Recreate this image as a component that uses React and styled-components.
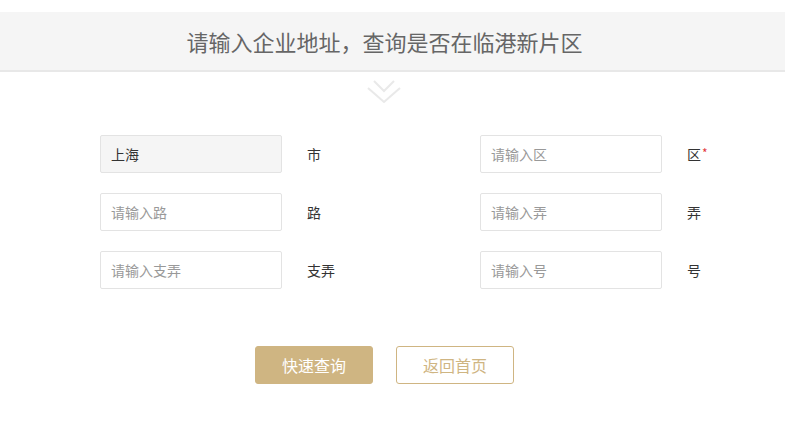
import React from "react";
import styled, { createGlobalStyle } from "styled-components";

const Global = createGlobalStyle`
  html, body { margin: 0; padding: 0; background: #fff; }
  body { font-family: "Noto Sans CJK SC", "Noto Sans", sans-serif; }
  input::placeholder { color: #999; }
`;

const Page = styled.div`
  padding-top: 12px;
`;

const Header = styled.div`
  height: 58px;
  background: #f5f5f5;
  border-bottom: 2px solid #e8e8e8;
  display: flex;
  align-items: center;
  justify-content: center;
  padding-right: 16px;
`;

const Title = styled.h1`
  margin: 0;
  font-size: 22px;
  font-weight: 400;
  color: #666;
  line-height: 1;
`;

const ChevronWrap = styled.div`
  display: flex;
  justify-content: center;
  padding-right: 16px;
  margin-top: 8px;
  height: 24px;
`;

const Form = styled.div`
  margin-top: 31px;
  padding-left: 100px;
  display: grid;
  grid-template-columns: 380px 260px;
  row-gap: 20px;
`;

const Field = styled.div`
  display: flex;
  align-items: center;
`;

const Input = styled.input`
  box-sizing: border-box;
  width: 182px;
  height: 38px;
  border: 1px solid #e3e3e3;
  border-radius: 2px;
  padding: 0 10px;
  font-family: inherit;
  font-size: 14px;
  color: #333;
  background: ${(p) => (p.readOnly ? "#f5f5f5" : "#fff")};
  outline: none;
`;

const Label = styled.span`
  margin-left: 25px;
  font-size: 14px;
  color: #333;
`;

const Star = styled.span`
  color: #e4393c;
  font-size: 12px;
  vertical-align: top;
  margin-left: 1px;
`;

const Actions = styled.div`
  margin-top: 57px;
  display: flex;
  justify-content: center;
  gap: 23px;
  padding-right: 16px;
`;

const Button = styled.button`
  box-sizing: border-box;
  width: 118px;
  height: 38px;
  border-radius: 3px;
  font-family: inherit;
  font-size: 16px;
  cursor: pointer;
  border: 1px solid #cfb582;
  background: ${(p) => (p.$primary ? "#cfb582" : "#fff")};
  color: ${(p) => (p.$primary ? "#fff" : "#cfb582")};
`;

const fields = [
  { value: "上海", label: "市" },
  { placeholder: "请输入区", label: "区", required: true },
  { placeholder: "请输入路", label: "路" },
  { placeholder: "请输入弄", label: "弄" },
  { placeholder: "请输入支弄", label: "支弄" },
  { placeholder: "请输入号", label: "号" },
];

export default function App() {
  return (
    <>
      <Global />
      <Page>
        <Header>
          <Title>请输入企业地址，查询是否在临港新片区</Title>
        </Header>
        <ChevronWrap>
          <svg width="36" height="24" viewBox="0 0 36 24" fill="none" stroke="#e9e9e9" strokeWidth="2">
            <polyline points="7,1 17,11 27,1" />
            <polyline points="1,8 17,22 33,8" />
          </svg>
        </ChevronWrap>
        <Form>
          {fields.map((f, i) => (
            <Field key={i}>
              {f.value ? (
                <Input readOnly value={f.value} />
              ) : (
                <Input placeholder={f.placeholder} />
              )}
              <Label>
                {f.label}
                {f.required && <Star>*</Star>}
              </Label>
            </Field>
          ))}
        </Form>
        <Actions>
          <Button $primary>快速查询</Button>
          <Button>返回首页</Button>
        </Actions>
      </Page>
    </>
  );
}
